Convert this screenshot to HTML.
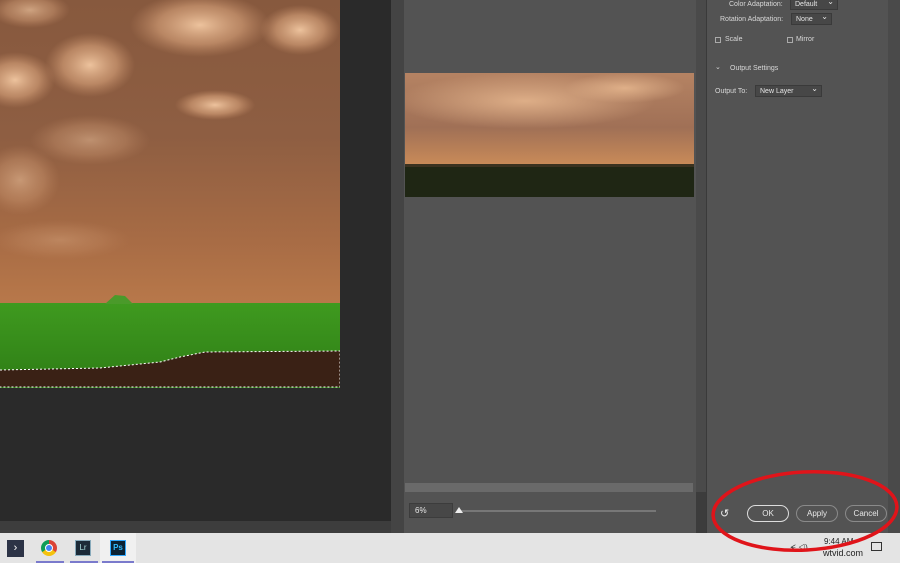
<!DOCTYPE html>
<html><head><meta charset="utf-8"><style>
*{margin:0;padding:0;box-sizing:border-box}
body{width:900px;height:563px;overflow:hidden;background:#3c3c3c;font-family:"Liberation Sans",sans-serif;position:relative}
.a{position:absolute}
.t{color:#d8d8d8;font-size:7px;white-space:nowrap}
.dd{position:absolute;border:1px solid #3a3a3a;background:#474747;color:#e6e6e6;font-size:7px;padding:1px 4px;height:12px;line-height:9px}
.dd:after{content:"⌄";position:absolute;right:3px;top:-2px;font-size:8px}
.cb{position:absolute;width:6px;height:6px;border:1px solid #aaa}
.btn{position:absolute;top:505px;height:17px;border:1px solid #8a8a8a;border-radius:9px;color:#e8e8e8;font-size:8px;text-align:center;line-height:15px}
</style></head><body>
<div class="a" style="left:0;top:0;width:391px;height:521px;background:#2a2a2a"></div>
<svg class="a" style="left:0;top:0" width="340" height="388">
<defs>
<linearGradient id="sk" x1="0" y1="0" x2="0" y2="1"><stop offset="0" stop-color="#87593e"/><stop offset="0.45" stop-color="#8e5e42"/><stop offset="0.8" stop-color="#a86c45"/><stop offset="1" stop-color="#b8784a"/></linearGradient>
<radialGradient id="cl"><stop offset="0" stop-color="#f2c8a2" stop-opacity=".95"/><stop offset=".6" stop-color="#d9a47c" stop-opacity=".6"/><stop offset="1" stop-color="#c8906a" stop-opacity="0"/></radialGradient>
<linearGradient id="gr" x1="0" y1="0" x2="0" y2="1"><stop offset="0" stop-color="#3f9a1f"/><stop offset="1" stop-color="#2e7d16"/></linearGradient>
</defs>
<rect width="340" height="303" fill="url(#sk)"/>
<ellipse cx="200" cy="25" rx="70" ry="32" fill="url(#cl)"/>
<ellipse cx="90" cy="65" rx="45" ry="32" fill="url(#cl)"/>
<ellipse cx="15" cy="80" rx="40" ry="28" fill="url(#cl)"/>
<ellipse cx="300" cy="30" rx="40" ry="25" fill="url(#cl)"/>
<ellipse cx="30" cy="10" rx="40" ry="18" fill="url(#cl)" opacity=".7"/>
<ellipse cx="215" cy="105" rx="40" ry="15" fill="url(#cl)"/>
<ellipse cx="20" cy="180" rx="40" ry="35" fill="url(#cl)" opacity=".55"/>
<ellipse cx="90" cy="140" rx="60" ry="25" fill="url(#cl)" opacity=".5"/>
<ellipse cx="60" cy="240" rx="70" ry="20" fill="url(#cl)" opacity=".3"/>
<rect y="303" width="340" height="85" fill="url(#gr)"/>
<path d="M105 304 L115 295 L125 296 L133 304Z" fill="#4a9a2a"/>
<path d="M0 370 L100 368 L160 362 L180 357 L205 352 L340 351 L340 387 L0 387Z" fill="#3a2115"/>
<path d="M0 370 L100 368 L160 362 L180 357 L205 352 L340 351 L340 387 L0 387" fill="none" stroke="#fff" stroke-width="1" stroke-dasharray="2 2"/>
</svg>
<div class="a" style="left:391px;top:0;width:13px;height:533px;background:#444"></div>
<div class="a" style="left:0;top:521px;width:391px;height:12px;background:#3d3d3d"></div>
<div class="a" style="left:404px;top:0;width:292px;height:533px;background:#535353"></div>
<div class="a" style="left:696px;top:0;width:10px;height:492px;background:#4a4a4a"></div>
<div class="a" style="left:706px;top:0;width:1px;height:533px;background:#3a3a3a"></div>
<div class="a" style="left:707px;top:0;width:181px;height:533px;background:#535353"></div>
<div class="a" style="left:888px;top:0;width:12px;height:533px;background:#4a4a4a"></div>
<svg class="a" style="left:405px;top:73px" width="289" height="124">
<defs><linearGradient id="s2" x1="0" y1="0" x2="0" y2="1"><stop offset="0" stop-color="#b58363"/><stop offset=".6" stop-color="#a07056"/><stop offset="1" stop-color="#c88a58"/></linearGradient>
<radialGradient id="c2"><stop offset="0" stop-color="#eabb92" stop-opacity=".8"/><stop offset="1" stop-color="#eabb92" stop-opacity="0"/></radialGradient></defs>
<rect width="289" height="91" fill="url(#s2)"/>
<ellipse cx="120" cy="28" rx="130" ry="28" fill="url(#c2)"/>
<ellipse cx="220" cy="15" rx="60" ry="15" fill="url(#c2)"/>
<rect y="91" width="289" height="33" fill="#1f2614"/>
<rect y="91" width="289" height="3" fill="#3a3220"/>
</svg>
<div class="a" style="left:405px;top:483px;width:288px;height:9px;background:#6a6a6a"></div>
<div class="a" style="left:409px;top:503px;width:44px;height:15px;background:#474747;border:1px solid #3c3c3c;color:#e6e6e6;font-size:8px;padding-left:5px;line-height:13px">6%</div>
<div class="a" style="left:460px;top:510px;width:196px;height:2px;background:#777"></div>
<div class="a" style="left:455px;top:507px;width:0;height:0;border-left:4px solid transparent;border-right:4px solid transparent;border-bottom:6px solid #eee"></div>
<div class="t a" style="left:729px;top:1px">Color Adaptation:</div>
<div class="dd" style="left:790px;top:-2px;width:48px">Default</div>
<div class="t a" style="left:720px;top:16px">Rotation Adaptation:</div>
<div class="dd" style="left:791px;top:13px;width:41px">None</div>
<div class="cb" style="left:715px;top:37px"></div><div class="t a" style="left:725px;top:36px">Scale</div>
<div class="cb" style="left:787px;top:37px"></div><div class="t a" style="left:796px;top:36px">Mirror</div>
<div class="t a" style="left:715px;top:63px">⌄</div><div class="t a" style="left:730px;top:65px">Output Settings</div>
<div class="t a" style="left:715px;top:88px">Output To:</div>
<div class="dd" style="left:755px;top:85px;width:67px">New Layer</div>
<div class="t a" style="left:720px;top:507px;font-size:11px;color:#eee">↺</div>
<div class="btn" style="left:747px;width:42px;border-color:#ddd">OK</div>
<div class="btn" style="left:796px;width:42px">Apply</div>
<div class="btn" style="left:845px;width:42px">Cancel</div>
<div class="a" style="left:0;top:533px;width:900px;height:30px;background:#e4e4e4"></div>
<div class="a" style="left:100px;top:533px;width:36px;height:30px;background:#f0f0f0"></div>
<div class="a" style="left:7px;top:540px;width:17px;height:17px;background:#2c3346;color:#fff;font-size:11px;text-align:center;line-height:17px">›</div>
<div class="a" style="left:41px;top:540px;width:16px;height:16px;border-radius:50%;background:conic-gradient(#db4437 0 120deg,#f4c20d 120deg 240deg,#0f9d58 240deg)"></div>
<div class="a" style="left:45px;top:544px;width:8px;height:8px;border-radius:50%;background:#4285f4;border:1.5px solid #fff"></div>
<div class="a" style="left:75px;top:540px;width:16px;height:16px;background:#1c2a38;border:1px solid #8ab;color:#add;font-size:8px;text-align:center;line-height:14px">Lr</div>
<div class="a" style="left:110px;top:540px;width:16px;height:16px;background:#0b2233;border:1px solid #3af;color:#3bf;font-size:8px;text-align:center;line-height:14px;font-weight:bold">Ps</div>
<div class="a" style="left:36px;top:561px;width:28px;height:2px;background:#7a7acc"></div>
<div class="a" style="left:70px;top:561px;width:28px;height:2px;background:#7a7acc"></div>
<div class="a" style="left:102px;top:561px;width:32px;height:2px;background:#7a7acc"></div>
<div class="a" style="left:824px;top:537px;font-size:8px;color:#222">9:44 AM</div>
<div class="a" style="left:790px;top:543px;font-size:8px;color:#333">ᗕ ◁)</div>
<div class="a" style="left:823px;top:548px;font-size:9px;color:#222">wtvid.com</div>
<div class="a" style="left:871px;top:542px;width:11px;height:9px;border:1px solid #333"></div>
<svg class="a" style="left:0;top:0" width="900" height="563"><ellipse cx="805" cy="511" rx="92" ry="39" fill="none" stroke="#e0141a" stroke-width="3.5" transform="rotate(-3 805 511)"/></svg>
</body></html>
